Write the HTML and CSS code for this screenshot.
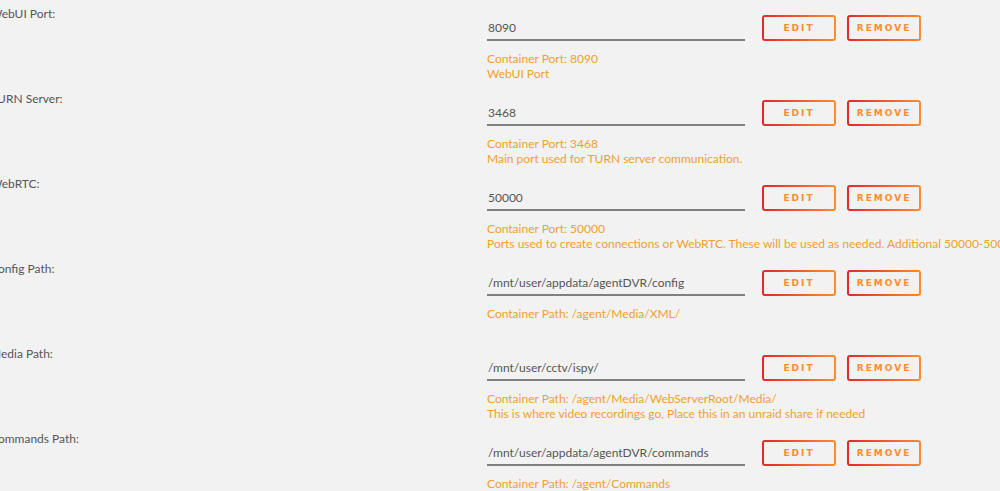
FILE: index.html
```html
<!DOCTYPE html>
<html lang="en">

<head>
    <meta charset="UTF-8">
    <meta name="viewport" content="width=device-width, initial-scale=1.0">
    <title>Container Settings</title>
    <link rel="stylesheet" href="styles.css">
</head>

<body>
    <div class="settings">
        <div class="row">
            <div class="label">WebUI Port:</div>
            <div class="value">
                <div class="field">
                    <input type="text" class="text-input" value="8090">
                    <button class="btn">Edit</button>
                    <button class="btn">Remove</button>
                </div>
                <div class="note">Container Port: 8090</div>
                <div class="note">WebUI Port</div>
            </div>
        </div>

        <div class="row">
            <div class="label">TURN Server:</div>
            <div class="value">
                <div class="field">
                    <input type="text" class="text-input" value="3468">
                    <button class="btn">Edit</button>
                    <button class="btn">Remove</button>
                </div>
                <div class="note">Container Port: 3468</div>
                <div class="note">Main port used for TURN server communication.</div>
            </div>
        </div>

        <div class="row">
            <div class="label">WebRTC:</div>
            <div class="value">
                <div class="field">
                    <input type="text" class="text-input" value="50000">
                    <button class="btn">Edit</button>
                    <button class="btn">Remove</button>
                </div>
                <div class="note">Container Port: 50000</div>
                <div class="note">Ports used to create connections or WebRTC. These will be used as needed. Additional 50000-50010 range must also be mapped if you need more connections.</div>
            </div>
        </div>

        <div class="row">
            <div class="label">Config Path:</div>
            <div class="value">
                <div class="field">
                    <input type="text" class="text-input" value="/mnt/user/appdata/agentDVR/config">
                    <button class="btn">Edit</button>
                    <button class="btn">Remove</button>
                </div>
                <div class="note">Container Path: /agent/Media/XML/</div>
            </div>
        </div>

        <div class="row">
            <div class="label">Media Path:</div>
            <div class="value">
                <div class="field">
                    <input type="text" class="text-input" value="/mnt/user/cctv/ispy/">
                    <button class="btn">Edit</button>
                    <button class="btn">Remove</button>
                </div>
                <div class="note">Container Path: /agent/Media/WebServerRoot/Media/</div>
                <div class="note">This is where video recordings go, Place this in an unraid share if needed</div>
            </div>
        </div>

        <div class="row">
            <div class="label">Commands Path:</div>
            <div class="value">
                <div class="field">
                    <input type="text" class="text-input" value="/mnt/user/appdata/agentDVR/commands">
                    <button class="btn">Edit</button>
                    <button class="btn">Remove</button>
                </div>
                <div class="note">Container Path: /agent/Commands</div>
            </div>
        </div>
    </div>
</body>

</html>
```

FILE: styles.css
```css
html,
body {
    margin: 0;
    height: 100%;
    overflow: hidden;
}

body {
    font-family: Lato, "Noto Sans", sans-serif;
    font-size: 12px;
    color: #555;
    background-color: #f2f2f2;
}

.settings {
    margin-left: -10px;
}

.row {
    display: grid;
    grid-template-columns: 497px 1fr;
    height: 85px;
}

.label {
    padding-top: 6px;
    line-height: 16px;
    font-size: 12px;
    color: #555;
}

.value {
    padding-top: 15px;
    white-space: nowrap;
}

.field {
    display: flex;
    align-items: center;
    height: 26px;
}

.text-input {
    width: 258px;
    height: 26px;
    box-sizing: border-box;
    padding: 0 1px;
    margin: 0 17px 0 0;
    border: none;
    border-bottom: 2px solid #808080;
    background: transparent;
    font-family: inherit;
    font-size: 12px;
    color: #555;
    outline: none;
}

.btn {
    width: 74px;
    height: 26px;
    margin-right: 11px;
    padding: 0;
    border: 2px solid transparent;
    border-radius: 3px;
    background: linear-gradient(#f2f2f2, #f2f2f2) padding-box,
        linear-gradient(90deg, #e22828, #ff8c2f) border-box;
    color: #ff8c2f;
    font-family: "DejaVu Sans", sans-serif;
    font-size: 9px;
    font-weight: bold;
    letter-spacing: 2px;
    text-transform: uppercase;
    cursor: pointer;
}

.note {
    line-height: 15px;
    font-size: 12px;
    color: #f0a030;
}

.field + .note {
    margin-top: 10px;
}
```
